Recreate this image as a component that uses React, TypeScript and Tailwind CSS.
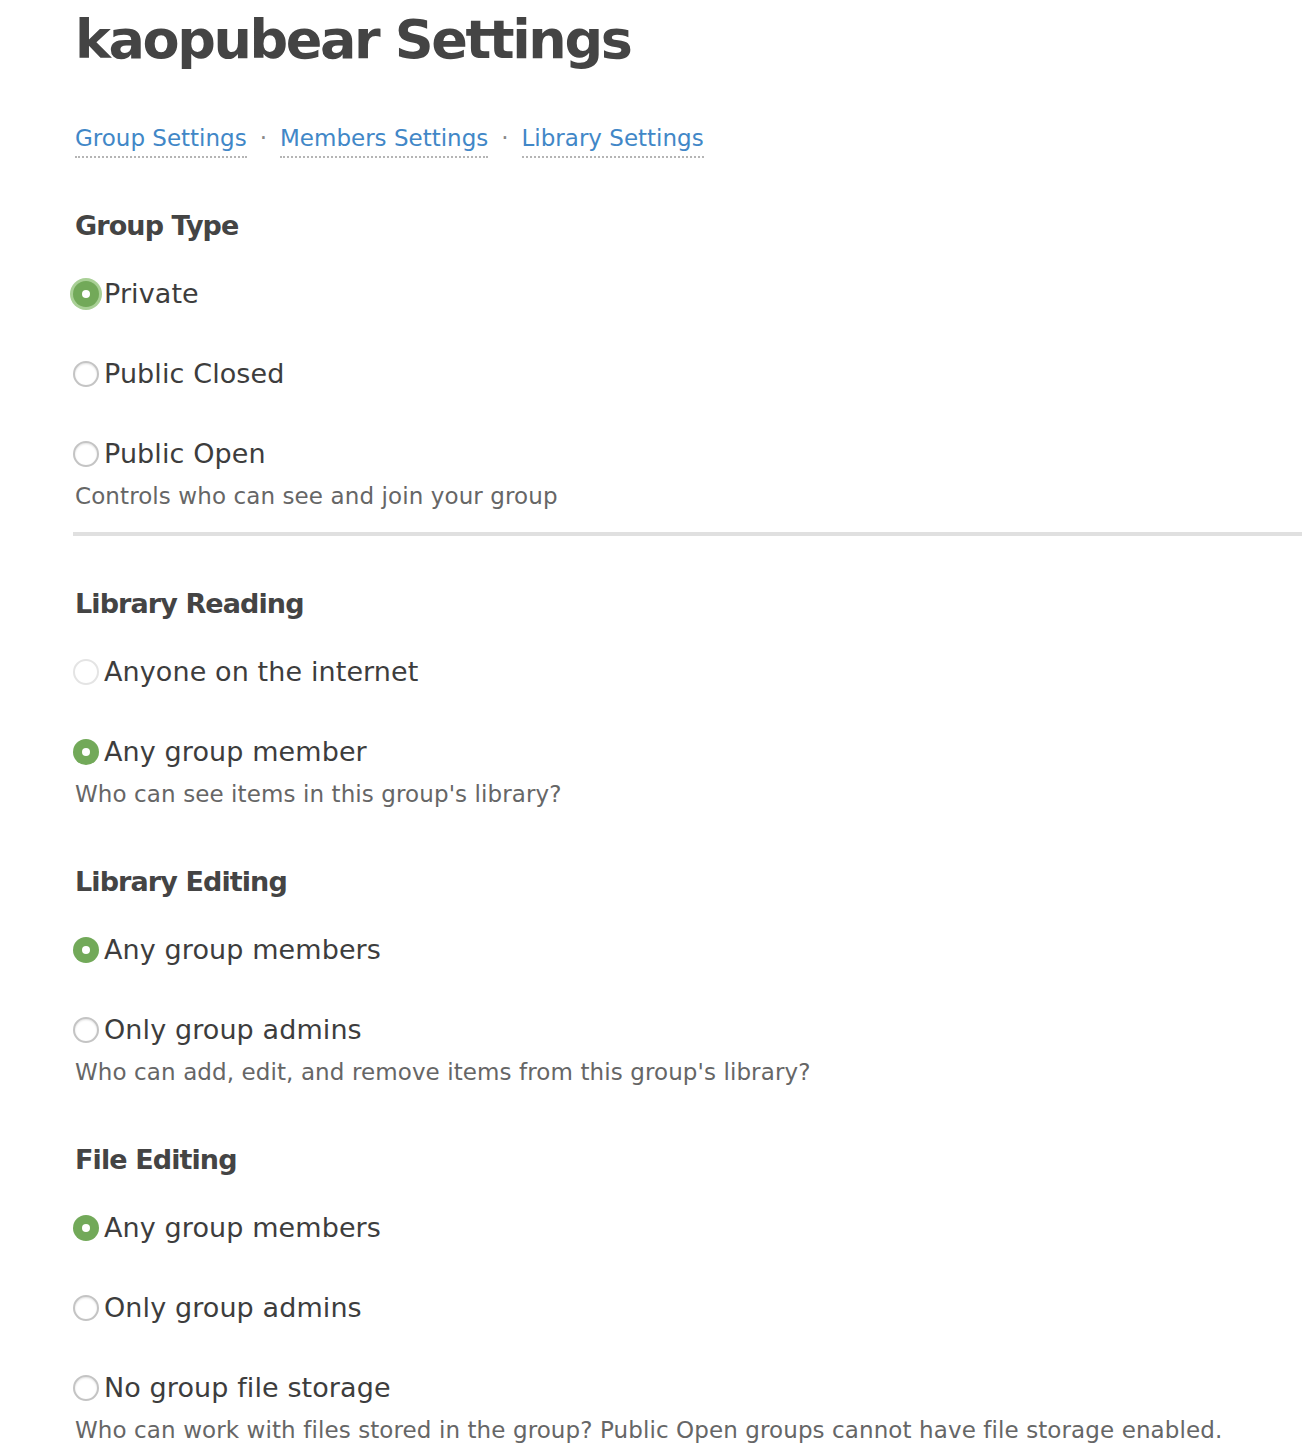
import React from 'react';

type Opt = { label: string; checked?: boolean; focus?: boolean; faint?: boolean };

const Radio: React.FC<Opt> = ({ checked, focus, faint }) => {
    if (checked) {
        return (
            <span
                className={
                    'flex items-center justify-center w-[26px] h-[26px] rounded-full bg-[#72a959] shrink-0 ' +
                    (focus ? 'ring-[3px] ring-[#a9d096]' : '')
                }
            >
                <span className="w-[8px] h-[8px] rounded-full bg-white" />
            </span>
        );
    }
    return (
        <span
            className={
                'w-[26px] h-[26px] rounded-full bg-white shrink-0 border-2 ' +
                (faint ? 'border-[#e4e4e4]' : 'border-[#c4c4c4] shadow-[inset_0_1px_2px_rgba(0,0,0,0.12)]')
            }
        />
    );
};

const Section: React.FC<{ title: string; options: Opt[]; hint: string; first?: boolean }> = ({ title, options, hint, first }) => (
    <div className={first ? 'mt-[50px]' : 'mt-[56px]'}>
        <h2 className="h-[36px] leading-[36px] pl-[2px] text-[27px] font-bold tracking-[-0.9px] text-[#444]">{title}</h2>
        <div className="mt-[32px] flex flex-col gap-[44px]">
            {options.map((o) => (
                <label key={o.label} className="flex items-center gap-[5px] h-[36px]">
                    <Radio {...o} />
                    <span className="text-[27px] leading-[36px] tracking-[0.1px] text-[#3d3d3d]">{o.label}</span>
                </label>
            ))}
        </div>
        <p className="mt-[10px] h-[28px] leading-[28px] pl-[2px] text-[23px] tracking-[0.1px] text-[#666] whitespace-nowrap">{hint}</p>
    </div>
);

export default function App() {
    const links = ['Group Settings', 'Members Settings', 'Library Settings'];
    return (
        <div className="min-h-screen bg-white pl-[73px] font-['DejaVu_Sans',sans-serif]">
            <h1 className="h-[80px] leading-[80px] pl-[2px] text-[54px] font-bold text-[#444] tracking-[-2.4px]">
                kaopubear Settings
            </h1>
            <nav className="mt-[43px] pl-[2px] flex items-start text-[23px]">
                {links.map((l, i) => (
                    <React.Fragment key={l}>
                        {i > 0 && <span className="mx-[13px] leading-[30px] text-[#888]">·</span>}
                        <a href="#" className="leading-[30px] pb-[3px] border-b-2 border-dotted border-[#b5b5b5] text-[#4187c7]">
                            {l}
                        </a>
                    </React.Fragment>
                ))}
            </nav>

            <Section
                first
                title="Group Type"
                options={[{ label: 'Private', checked: true, focus: true }, { label: 'Public Closed' }, { label: 'Public Open' }]}
                hint="Controls who can see and join your group"
            />

            <hr className="mt-[22px] border-0 h-[4px] bg-[#e0e0e0]" />

            <div className="mt-[50px]">
                <Section
                    first
                    title="Library Reading"
                    options={[{ label: 'Anyone on the internet', faint: true }, { label: 'Any group member', checked: true }]}
                    hint="Who can see items in this group's library?"
                />
            </div>
            <Section
                title="Library Editing"
                options={[{ label: 'Any group members', checked: true }, { label: 'Only group admins' }]}
                hint="Who can add, edit, and remove items from this group's library?"
            />
            <Section
                title="File Editing"
                options={[{ label: 'Any group members', checked: true }, { label: 'Only group admins' }, { label: 'No group file storage' }]}
                hint="Who can work with files stored in the group? Public Open groups cannot have file storage enabled."
            />
        </div>
    );
}
